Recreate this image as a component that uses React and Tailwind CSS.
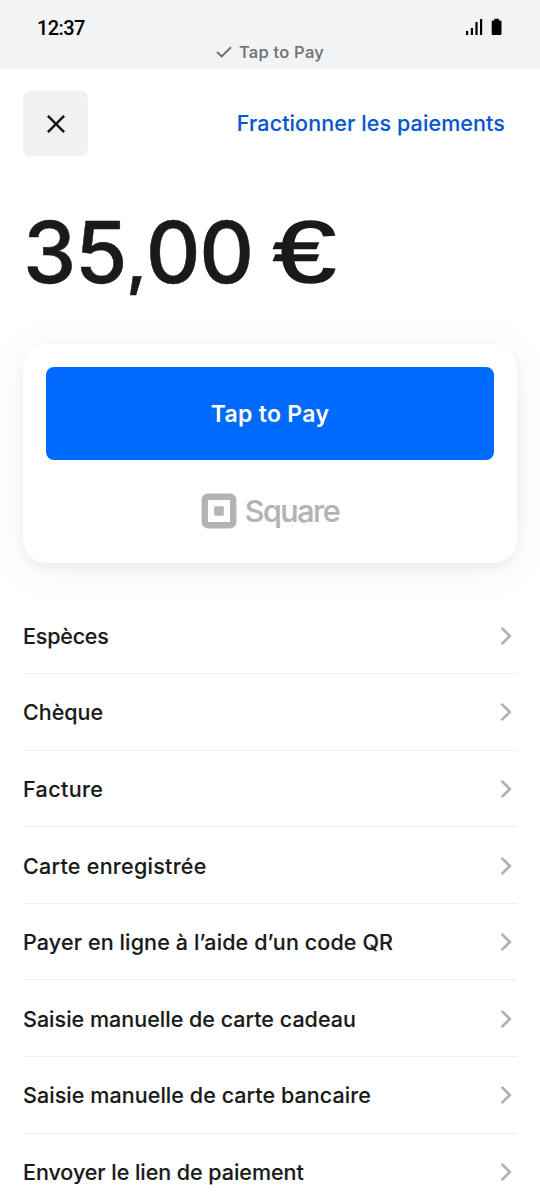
const methods = [
  { id: "cash", label: "Espèces", tracking: "tracking-[-0.2px]" },
  { id: "check", label: "Chèque", tracking: "tracking-[0px]" },
  { id: "invoice", label: "Facture", tracking: "tracking-[0.38px]" },
  { id: "card-on-file", label: "Carte enregistrée", tracking: "tracking-[0.27px]" },
  { id: "qr", label: "Payer en ligne à l’aide d’un code QR", tracking: "tracking-[0.12px]" },
  { id: "gift-card", label: "Saisie manuelle de carte cadeau", tracking: "tracking-[0.01px]" },
  { id: "manual-card", label: "Saisie manuelle de carte bancaire", tracking: "tracking-[0.06px]" },
  { id: "link", label: "Envoyer le lien de paiement", tracking: "tracking-[-0.05px]" },
];

function StatusBar() {
  return (
    <header className="h-[69px] bg-[#f2f3f5]">
      <div className="flex h-[42px] items-center justify-between pt-[13px] pr-[37px] pl-[37px]">
        <span className="font-[Roboto,sans-serif] text-[20px] leading-6 font-medium tracking-[-0.6px] text-black">
          12:37
        </span>
        <svg width="37" height="18" viewBox="0 0 37 18" className="mb-[2px]" fill="#000">
          <rect x="0" y="13" width="2.2" height="4" />
          <rect x="4.8" y="10" width="2.2" height="7" />
          <rect x="9.4" y="4" width="2.2" height="13" />
          <rect x="14" y="1" width="2.2" height="16" />
          <path d="M28.3 0.8h4.6v1.6h1.4q1.2 0 1.2 1.2v12.2q0 1.2-1.2 1.2h-7.4q-1.2 0-1.2-1.2V3.6q0-1.2 1.2-1.2h1.4z" />
        </svg>
      </div>
      <div className="flex h-[20px] items-center justify-center gap-[7px] text-[#6f7073]">
        <svg width="16" height="12" viewBox="0 0 16 12" fill="none" stroke="currentColor" strokeWidth="2">
          <path d="M1 6l4.7 4.4L15 1.2" />
        </svg>
        <span className="text-[16.5px] leading-5 font-medium tracking-[0.25px] [-webkit-text-stroke:0.1px]">
          Tap to Pay
        </span>
      </div>
    </header>
  );
}

function SquareLogo() {
  return (
    <div className="flex items-center justify-center gap-[8px] text-[#b3b3b3]">
      <svg width="36" height="36" viewBox="0 0 36 36" fill="none">
        <rect x="3.8" y="3.8" width="28.4" height="28.4" rx="3" stroke="currentColor" strokeWidth="6.4" />
        <rect x="13.2" y="13.2" width="9.6" height="9.6" rx="1" fill="currentColor" />
      </svg>
      <span className="text-[30.5px] leading-9 font-medium tracking-[-1.5px] [-webkit-text-stroke:0.2px]">
        Square
      </span>
    </div>
  );
}

function MethodRow({ label, tracking }) {
  return (
    <li className="flex h-[76.6px] items-center justify-between border-b border-[#f0f0f0] pt-px pr-[4px]">
      <span
        className={`text-[21.5px] leading-7 font-medium whitespace-nowrap [-webkit-text-stroke:0.12px] ${tracking}`}
      >
        {label}
      </span>
      <svg width="14" height="20" viewBox="0 0 14 20" fill="none" stroke="#b0b0b0" strokeWidth="2.6">
        <path d="M2.6 1.8l8.2 8.2-8.2 8.2" />
      </svg>
    </li>
  );
}

export default function App() {
  return (
    <div className="h-[1200px] w-[540px] overflow-hidden bg-white font-[Inter,sans-serif] text-[#1a1a1a]">
      <StatusBar />

      <main className="px-[23px]">
        <div className="flex items-center justify-between pt-[22px] pr-[12px]">
          <button className="flex size-[65px] items-center justify-center rounded-[7px] bg-[#f1f1f1]">
            <svg width="18" height="18" viewBox="0 0 18 18" fill="none" stroke="#1a1a1a" strokeWidth="2.6">
              <path d="M0.9 0.9l16.2 16.2M17.1 0.9L0.9 17.1" />
            </svg>
          </button>
          <button className="pb-px text-[21.5px] leading-7 font-medium tracking-[0.1px] text-[#0a56d0] [-webkit-text-stroke:0.12px]">
            Fractionner les paiements
          </button>
        </div>

        <h1 className="mt-[44px] flex h-[104.5px] items-baseline text-[85px] leading-[105px] font-medium tracking-[-1.2px] whitespace-pre [-webkit-text-stroke:0.5px]">
          <span>35</span>
          <span className="text-[64px] font-semibold">,</span>
          <span>00</span>
          <span className="mb-[2px] ml-[20px] inline-block origin-left scale-x-130 -translate-y-px font-['Liberation_Sans',sans-serif] text-[87px] font-normal [-webkit-text-stroke:1.6px]">
            €
          </span>
        </h1>

        <section className="mt-[39px] h-[219px] rounded-[23px] bg-white p-[23px] shadow-[0_4px_12px_rgba(0,0,0,0.05),0_6px_46px_rgba(0,0,0,0.06)]">
          <button className="h-[93px] w-full rounded-[8px] bg-[#006aff] pt-[2px] text-[23px] font-semibold tracking-[0.3px] text-white">
            Tap to Pay
          </button>
          <div className="mt-[33px]">
            <SquareLogo />
          </div>
        </section>

        <ul className="mt-[35px]">
          {methods.map((method) => (
            <MethodRow key={method.id} label={method.label} tracking={method.tracking} />
          ))}
        </ul>
      </main>
    </div>
  );
}
